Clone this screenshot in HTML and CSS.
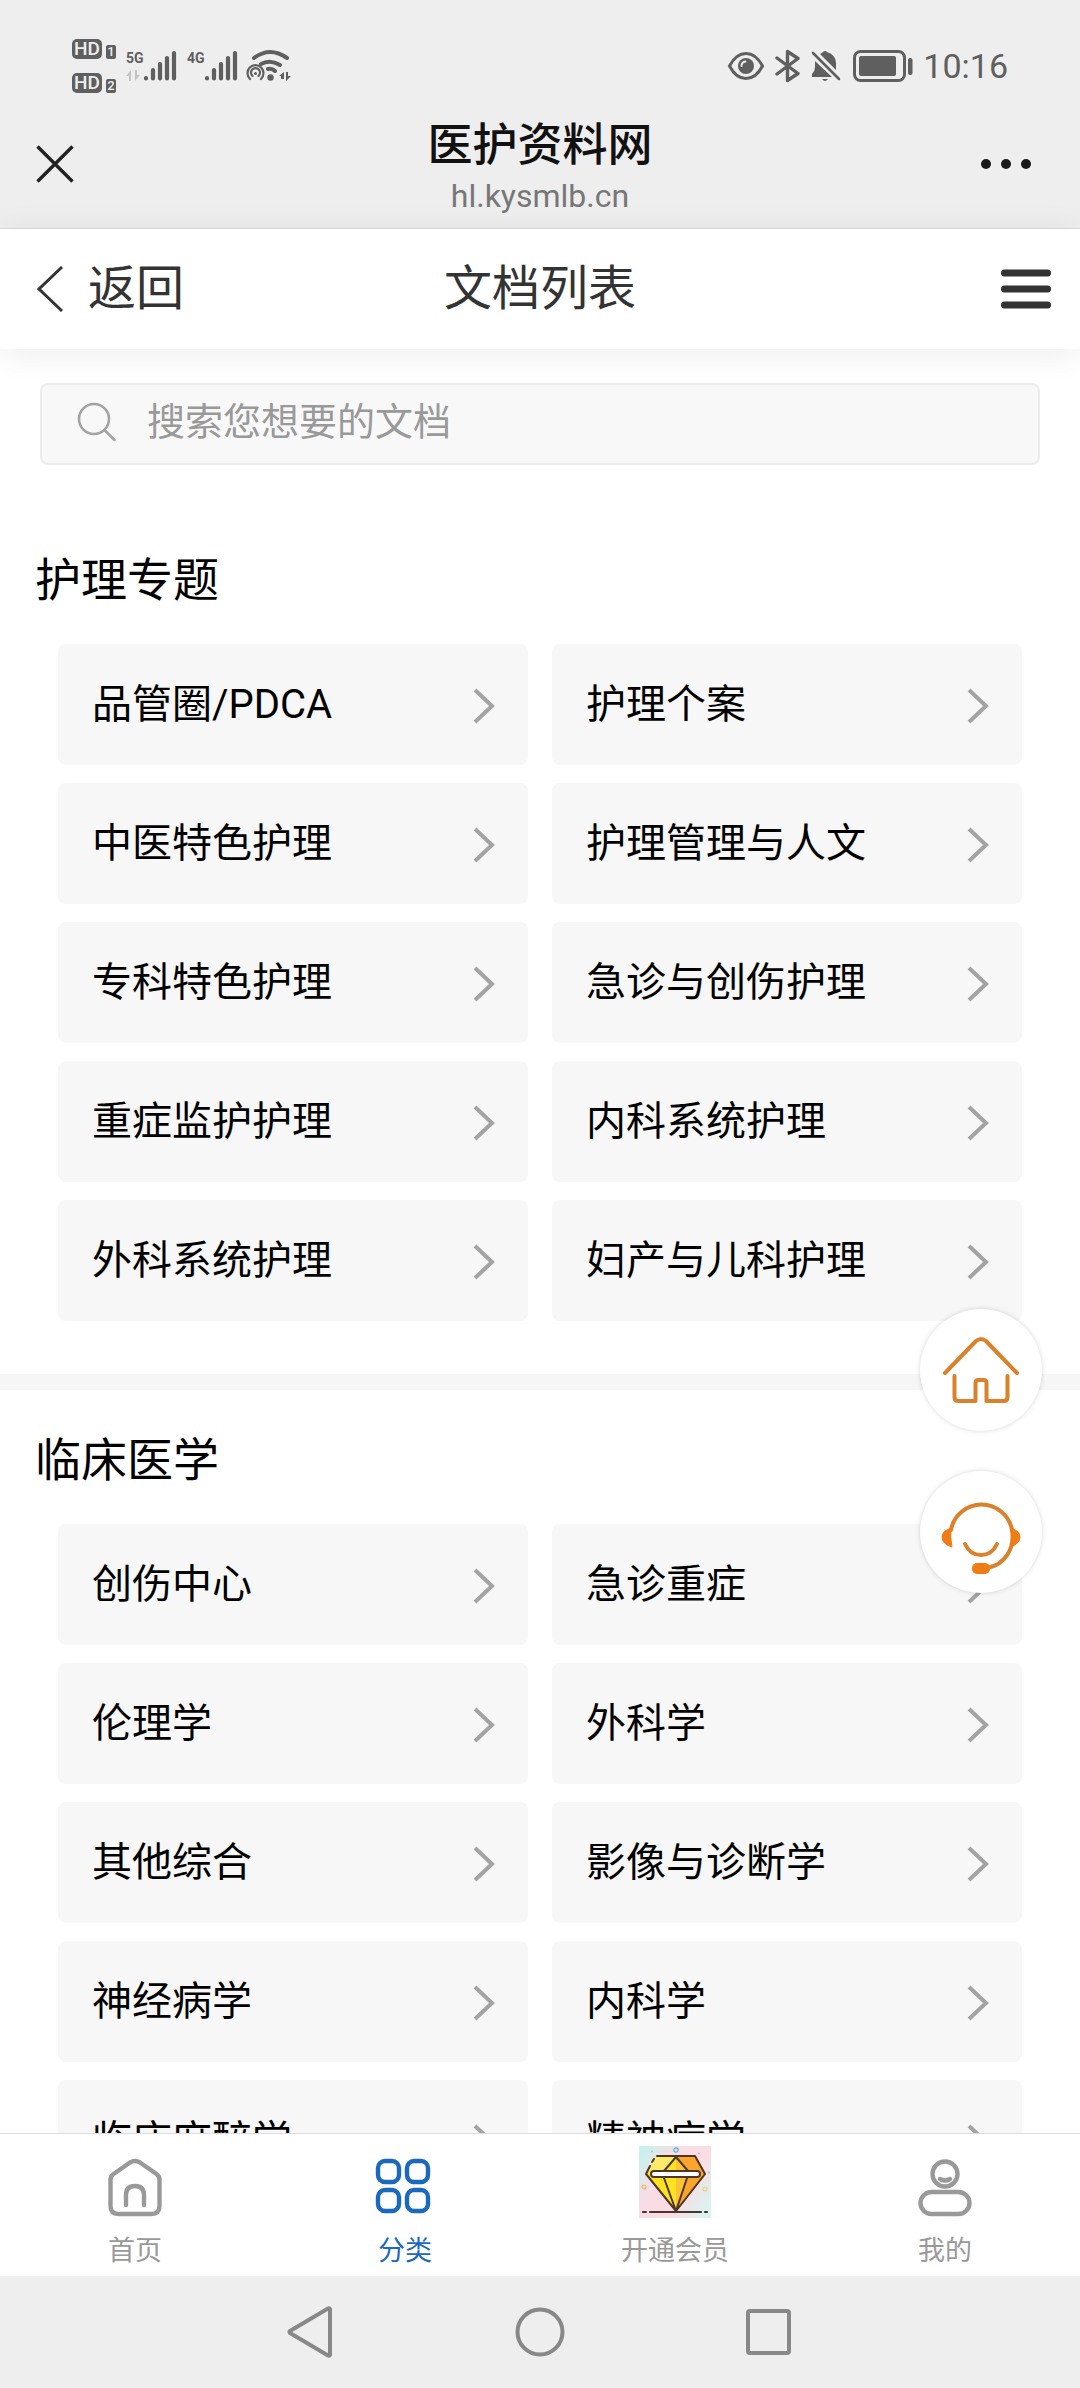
FILE: index.html
```html
<!DOCTYPE html>
<html lang="zh-CN">
<head>
<meta charset="utf-8">
<meta name="viewport" content="width=device-width, initial-scale=1">
<title>文档列表 - 医护资料网</title>
<link rel="stylesheet" href="styles.css">
</head>
<body>
<svg class="defs" width="0" height="0" aria-hidden="true">
  <symbol id="chevron" viewBox="0 0 22 36"><path d="M2 2l17 16L2 34" fill="none" stroke="#a3a3a3" stroke-width="4"/></symbol>
  <symbol id="signal" viewBox="0 0 34 32"><path d="M3 28v.5M10 20v8.500M17 14v14.500M24 8v20.500M31 3v25.500" fill="none" stroke="#5f5f5f" stroke-width="4.200" stroke-linecap="round"/></symbol>
</svg>

<div class="status">
  <div class="status-left">
    <div class="hd">
      <span class="hd-badge">HD</span><span class="sim">1</span>
      <span class="hd-badge">HD</span><span class="sim">2</span>
    </div>
    <div class="network">
      <div class="network-type"><span>5G</span>
        <svg width="14" height="11" viewBox="0 0 14 11"><path d="M0 6l5-6v11H3V6zM14 5l-5 6V0h2v5z" fill="#c4c4c4"/></svg>
      </div>
      <svg width="34" height="32"><use href="#signal"/></svg>
    </div>
    <div class="network network-second">
      <div class="network-type"><span>4G</span></div>
      <svg width="34" height="32"><use href="#signal"/></svg>
    </div>
    <svg class="wifi" width="46" height="34" viewBox="0 0 46 34" fill="none" stroke="#5f5f5f" stroke-linecap="round">
      <path d="M8 9q16-12 33 0M15 15q9-5 19 1M22 20q4-1 7 2" stroke-width="4"/>
      <path d="M4 30a8 8 0 1 1 11 0M6.500 27a4.500 4.500 0 1 1 6 0" stroke-width="2.200"/>
      <circle cx="9.500" cy="24.500" r="1.500" fill="#5f5f5f" stroke="none"/>
      <circle cx="24.500" cy="28.500" r="3.200" fill="#5f5f5f" stroke="none"/>
      <path d="M33 27l5-4v7h-3v-3zM45 27l-5 5v-9h2v4z" fill="#5f5f5f" stroke="none"/>
    </svg>
  </div>
  <div class="status-right">
    <svg width="38" height="32" viewBox="0 0 38 32"><path d="M2.500 16Q9 3.500 19 3.500T35.500 16Q29 28.500 19 28.500T2.500 16z" fill="none" stroke="#5f5f5f" stroke-width="3"/><circle cx="19" cy="16" r="8" fill="#5f5f5f"/><path d="M14.500 16q0-4 4-4.500" fill="none" stroke="#eee" stroke-width="1.800" stroke-linecap="round"/></svg>
    <svg width="26" height="34" viewBox="0 0 26 34"><path d="M2 9l21 15.500-10.500 7V2.500l10.500 7L2 25" fill="none" stroke="#5f5f5f" stroke-width="3.400" stroke-linejoin="round" stroke-linecap="round"/></svg>
    <svg width="30" height="32" viewBox="0 0 30 32"><path d="M9 4q2-1 3-2 2-2 4 0 9 3 9 11v7zM4 11l17 16H1v-3q3-3 3-7zM11 29h6q-3 4-6 0z" fill="#5f5f5f"/><path d="M2 3l26 26" stroke="#5f5f5f" stroke-width="2.600" stroke-linecap="round"/></svg>
    <svg class="battery" width="60" height="32" viewBox="0 0 60 32"><rect x="1.500" y="1.500" width="50" height="29" rx="6" fill="none" stroke="#5f5f5f" stroke-width="3"/><rect x="6" y="6" width="37" height="20" rx="2" fill="#5f5f5f"/><rect x="55" y="8" width="4.500" height="17" rx="2" fill="#5f5f5f"/></svg>
    <time>10:16</time>
  </div>
</div>

<header class="browser">
  <button class="icon-button" aria-label="关闭"><svg width="38" height="38" viewBox="0 0 38 38"><path d="M1.500 1.500l35 35M36.500 1.500l-35 35" stroke="#222" stroke-width="3.400"/></svg></button>
  <div class="browser-title">
    <strong>医护资料网</strong>
    <span>hl.kysmlb.cn</span>
  </div>
  <button class="icon-button icon-button-end" aria-label="更多"><svg width="52" height="12" viewBox="0 0 52 12" fill="#1a1a1a"><circle cx="6" cy="6" r="5"/><circle cx="26" cy="6" r="5"/><circle cx="46" cy="6" r="5"/></svg></button>
</header>

<div class="toolbar">
  <a class="back" href="#"><svg width="28" height="48" viewBox="0 0 28 48"><path d="M26 2L3 24l23 22" fill="none" stroke="#333" stroke-width="3"/></svg>返回</a>
  <h1>文档列表</h1>
  <button class="icon-button icon-button-end" aria-label="菜单"><svg width="52" height="40" viewBox="0 0 52 40"><path d="M4.500 4h43M4.500 20h43M4.500 36h43" stroke="#333" stroke-width="7" stroke-linecap="round"/></svg></button>
</div>

<div class="viewport">
  <main class="content">
    <form class="search">
      <label for="q" aria-label="搜索"><svg width="40" height="40" viewBox="0 0 40 40" fill="none" stroke="#a3a3a3" stroke-width="2.600"><circle cx="17" cy="17" r="15"/><path d="M27.500 28l10 10" stroke-linecap="round"/></svg></label>
      <input id="q" type="text" placeholder="搜索您想要的文档">
    </form>

    <section class="section">
      <h2>护理专题</h2>
      <div class="cards">
        <a class="card" href="#">品管圈/PDCA<svg width="22" height="36"><use href="#chevron"/></svg></a>
        <a class="card" href="#">护理个案<svg width="22" height="36"><use href="#chevron"/></svg></a>
        <a class="card" href="#">中医特色护理<svg width="22" height="36"><use href="#chevron"/></svg></a>
        <a class="card" href="#">护理管理与人文<svg width="22" height="36"><use href="#chevron"/></svg></a>
        <a class="card" href="#">专科特色护理<svg width="22" height="36"><use href="#chevron"/></svg></a>
        <a class="card" href="#">急诊与创伤护理<svg width="22" height="36"><use href="#chevron"/></svg></a>
        <a class="card" href="#">重症监护护理<svg width="22" height="36"><use href="#chevron"/></svg></a>
        <a class="card" href="#">内科系统护理<svg width="22" height="36"><use href="#chevron"/></svg></a>
        <a class="card" href="#">外科系统护理<svg width="22" height="36"><use href="#chevron"/></svg></a>
        <a class="card" href="#">妇产与儿科护理<svg width="22" height="36"><use href="#chevron"/></svg></a>
      </div>
    </section>

    <section class="section">
      <h2>临床医学</h2>
      <div class="cards">
        <a class="card" href="#">创伤中心<svg width="22" height="36"><use href="#chevron"/></svg></a>
        <a class="card" href="#">急诊重症<svg width="22" height="36"><use href="#chevron"/></svg></a>
        <a class="card" href="#">伦理学<svg width="22" height="36"><use href="#chevron"/></svg></a>
        <a class="card" href="#">外科学<svg width="22" height="36"><use href="#chevron"/></svg></a>
        <a class="card" href="#">其他综合<svg width="22" height="36"><use href="#chevron"/></svg></a>
        <a class="card" href="#">影像与诊断学<svg width="22" height="36"><use href="#chevron"/></svg></a>
        <a class="card" href="#">神经病学<svg width="22" height="36"><use href="#chevron"/></svg></a>
        <a class="card" href="#">内科学<svg width="22" height="36"><use href="#chevron"/></svg></a>
        <a class="card" href="#">临床麻醉学<svg width="22" height="36"><use href="#chevron"/></svg></a>
        <a class="card" href="#">精神病学<svg width="22" height="36"><use href="#chevron"/></svg></a>
      </div>
    </section>
  </main>

  <div class="floating">
    <a class="float-button" href="#" aria-label="首页"><svg width="80" height="70" viewBox="0 0 80 70" fill="none" stroke="#d9822b" stroke-width="4" stroke-linecap="round" stroke-linejoin="round"><path d="M4 38L35 6q5-4 10 0l31 32"/><path d="M13.500 41v21q0 4 4 4h17V48q0-3 3-3h5q3 0 3 3v18h17q4 0 4-4V41"/></svg></a>
    <a class="float-button" href="#" aria-label="客服"><svg width="80" height="86" viewBox="0 -11 80 86" fill="none" stroke="#d9822b" stroke-width="4" stroke-linecap="round"><path d="M10 30a31 31 0 0 1 61 0c3 18-7 35-25 38"/><path d="M24 44q5 11 16 11t16-11"/><path d="M10 28Q1 31 1 37q0 7 10 10-2-9-1-19zM70 28q9 3 9 9t-9 10q2-9 0-19z" fill="#ef7d14" stroke="#ef7d14" stroke-width="1"/><rect x="31" y="63" width="18" height="11" rx="5" fill="#ef7d14" stroke="none"/></svg></a>
  </div>
</div>

<nav class="tabs">
  <a class="tab" href="#"><svg width="72" height="72" viewBox="0 0 72 72" fill="none" stroke="#999" stroke-width="4.400" stroke-linecap="round" stroke-linejoin="round"><path d="M11.500 34q0-4 3-6L31 16.500q5-3 10 0L57.500 28q3 2 3 6v26q0 8-8 8h-33q-8 0-8-8z"/><path d="M27 59V49q0-9 9-9t9 9v10"/></svg>首页</a>
  <a class="tab tab-active" href="#"><svg width="72" height="72" viewBox="0 0 72 72" fill="none" stroke="#1a69bd" stroke-width="4.400"><rect x="9" y="15" width="21" height="21" rx="7"/><rect x="38" y="15" width="21" height="21" rx="7"/><rect x="9" y="44" width="21" height="21" rx="7"/><rect x="38" y="44" width="21" height="21" rx="7"/></svg>分类</a>
  <a class="tab" href="#"><svg width="72" height="72" viewBox="0 0 72 72" stroke-linejoin="round" stroke-linecap="round">
    <defs><linearGradient id="wash" x1="0" y1=".2" x2="1" y2=".8"><stop offset="0" stop-color="#c9f1ec"/><stop offset=".3" stop-color="#f8dde6"/><stop offset=".65" stop-color="#fbdde2"/><stop offset="1" stop-color="#d8f3f2"/></linearGradient></defs>
    <rect width="72" height="72" fill="url(#wash)"/>
    <path d="M17 10h20v56L7 28z" fill="#fde21f"/><path d="M37 10h20l10 18-30 38z" fill="#fca52c"/><path d="M37 10l13 18-13 38z" fill="#fdc336"/><path d="M17 10h20L25 25 9 26z" fill="#fbea6c"/>
    <path d="M18 10h38l10 18-29 37L7 28l4-8M13 16l2-3M37 11L25 25M37 11l12 14M25 32l12 33 11-33" fill="none" stroke="#4d3528" stroke-width="2"/>
    <rect x="12" y="25" width="49" height="6" rx="3" fill="#fff" stroke="#4d3528" stroke-width="2"/>
    <path d="M4 66h3M11 66h51M66 66h2" stroke="#4d3528" stroke-width="2.200"/>
    <g fill="none" stroke-width="1.200"><circle cx="37" cy="4" r="2.200" stroke="#43b8dd"/><circle cx="5" cy="41" r="2" stroke="#f2ae63"/><circle cx="66" cy="43" r="2" stroke="#e7d575"/><path d="M13 5v1M60 7v1M70 26v1" stroke="#84bba6"/></g>
  </svg>开通会员</a>
  <a class="tab" href="#"><svg width="72" height="72" viewBox="0 0 72 72" fill="none" stroke="#999" stroke-width="4.400" stroke-linecap="round"><circle cx="36" cy="28" r="12.500"/><path d="M31 33q5 3 10 0"/><rect x="11.500" y="46" width="49" height="22" rx="11"/></svg>我的</a>
</nav>

<div class="system-nav">
  <button aria-label="返回"><svg width="50" height="54" viewBox="0 0 50 54"><path d="M44 4v46q-1 1-2 .500L4 28q-1-1 0-2L42 3.500q1-.5 2 .5z" fill="none" stroke="#888" stroke-width="4" stroke-linejoin="round"/></svg></button>
  <button aria-label="主屏幕"><svg width="54" height="54" viewBox="0 0 54 54"><circle cx="27" cy="27" r="22.500" fill="none" stroke="#888" stroke-width="4"/></svg></button>
  <button aria-label="最近任务"><svg width="50" height="54" viewBox="0 0 50 54"><rect x="4" y="6" width="41" height="42" rx="2" fill="none" stroke="#888" stroke-width="4"/></svg></button>
</div>
</body>
</html>
```
FILE: styles.css
```css
* {
  box-sizing: border-box;
}

body {
  display: flex;
  flex-direction: column;
  height: 100vh;
  margin: 0;
  background: #fff;
  color: #000;
  font-family: Roboto, "Noto Sans CJK SC", sans-serif;
}

a {
  color: inherit;
  text-decoration: none;
}

button {
  padding: 0;
  border: 0;
  background: none;
}

svg {
  display: block;
  flex: none;
}

.defs {
  position: absolute;
}

/* Phone status bar */
.status {
  display: flex;
  justify-content: space-between;
  align-items: center;
  height: 100px;
  padding: 32px 72px 0;
  background: #eee;
  color: #5f5f5f;
}

.status-left,
.status-right {
  display: flex;
  align-items: center;
}

.status-right {
  gap: 10px;
}

.hd {
  display: grid;
  grid-template-columns: 30px 10px;
  gap: 14px 4px;
  align-items: end;
  margin-right: 10px;
}

.hd-badge,
.sim {
  border-radius: 5px;
  background: #5f5f5f;
  color: #eee;
  font-weight: 500;
  text-align: center;
}

.hd-badge {
  height: 20px;
  font-size: 19px;
  line-height: 20px;
}

.sim {
  height: 14px;
  border-radius: 2px;
  font-size: 13px;
  line-height: 14px;
}

.network {
  display: flex;
}

.network-second {
  margin-left: 10px;
}

.network-type {
  display: flex;
  flex-direction: column;
  gap: 4px;
  width: 17px;
  font-size: 14px;
  font-weight: 700;
  line-height: 16px;
}

.wifi {
  margin-left: 8px;
}

.battery {
  margin-left: 2px;
}

time {
  font-size: 34px;
  line-height: 40px;
}

/* In-app browser header */
.browser,
.toolbar {
  display: grid;
  grid-template-columns: 1fr auto 1fr;
  align-items: center;
  flex: none;
  padding: 0 28px;
}

.browser {
  height: 129px;
  padding: 0 36px;
  border-bottom: 1px solid #ddd;
  background: #eee;
}

.icon-button {
  justify-self: start;
}

.icon-button-end {
  justify-self: end;
}

.browser .icon-button-end {
  padding-right: 12px;
}

.browser-title {
  display: flex;
  flex-direction: column;
  align-items: center;
  padding-top: 4px;
}

.browser-title strong {
  color: #111;
  font-size: 45px;
  font-weight: 500;
  line-height: 60px;
}

.browser-title span {
  color: #777;
  font-size: 32px;
  line-height: 40px;
}

.toolbar {
  position: relative;
  z-index: 1;
  height: 120px;
  background: #fff;
  box-shadow: 0 4px 32px rgba(0, 0, 0, 0.08);
  color: #333;
}

.back {
  display: flex;
  align-items: center;
  gap: 24px;
  padding-left: 8px;
  font-size: 48px;
  line-height: 64px;
}

h1 {
  margin: 0;
  font-size: 48px;
  font-weight: 400;
  line-height: 64px;
}

/* Scrolling document list */
.viewport {
  position: relative;
  flex: 1;
  min-height: 0;
}

.content {
  height: 100%;
  overflow-y: auto;
  scrollbar-width: none;
}

.search {
  display: flex;
  align-items: center;
  gap: 30px;
  height: 82px;
  margin: 34px 40px 45px;
  padding: 0 35px 4px;
  border: 2px solid #ececec;
  border-radius: 8px;
  background: #f8f8f8;
}

.search input {
  flex: 1;
  min-width: 0;
  padding: 0;
  border: 0;
  outline: 0;
  background: none;
  font: inherit;
  font-size: 38px;
  line-height: 56px;
}

.search input::placeholder {
  color: #999;
}

.section {
  padding: 38px 58px 53px;
}

.section + .section {
  border-top: 16px solid #f6f6f6;
}

h2 {
  margin: 0 0 32px -23px;
  font-size: 46px;
  font-weight: 400;
  line-height: 64px;
}

.cards {
  display: grid;
  grid-template-columns: 1fr 1fr;
  gap: 18px 24px;
}

.card {
  display: flex;
  justify-content: space-between;
  align-items: center;
  height: 121px;
  padding: 0 33px 8px 34px;
  border-radius: 8px;
  background: #f7f7f7;
  font-size: 40px;
}

.card svg {
  margin-top: 10px;
}

/* Shortcuts floating over the list */
.floating {
  position: absolute;
  right: 38px;
  bottom: 540px;
  display: flex;
  flex-direction: column;
  gap: 40px;
}

.float-button {
  display: flex;
  justify-content: center;
  align-items: center;
  width: 122px;
  height: 122px;
  border-radius: 50%;
  background: #fff;
  box-shadow: 0 0 5px rgba(0, 0, 0, 0.16);
}

/* Bottom tabs */
.tabs {
  display: grid;
  grid-template-columns: repeat(4, 1fr);
  flex: none;
  height: 143px;
  padding-top: 12px;
  border-top: 1px solid #ddd;
  background: #fff;
}

.tab {
  display: flex;
  flex-direction: column;
  align-items: center;
  gap: 13px;
  color: #999;
  font-size: 27px;
  line-height: 40px;
}

.tab-active {
  color: #1a69bd;
}

.system-nav {
  display: flex;
  justify-content: center;
  align-items: center;
  flex: none;
  height: 112px;
  background: #eee;
}

.system-nav button {
  display: flex;
  justify-content: center;
  width: 229px;
}
```
